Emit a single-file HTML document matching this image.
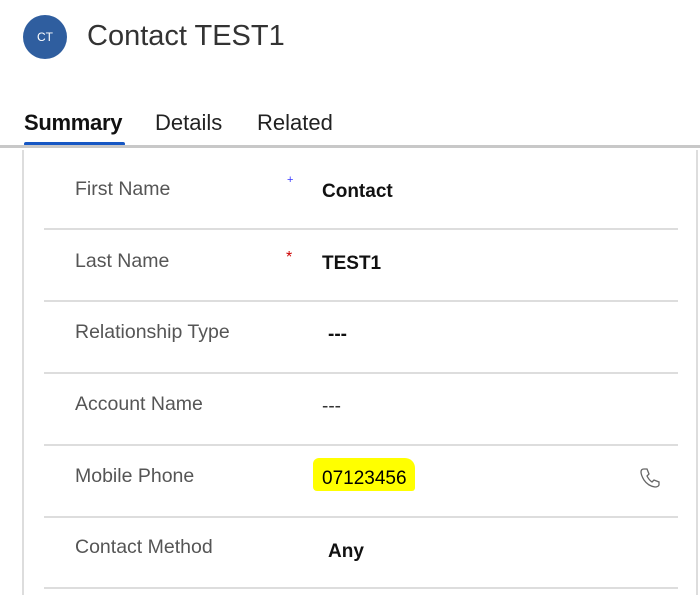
<!DOCTYPE html>
<html><head><style>
body{margin:0;width:700px;height:595px;background:#fff;font-family:"Liberation Sans",sans-serif;position:relative;overflow:hidden}
.a{position:absolute}
.lbl{position:absolute;left:75px;font-size:19.5px;color:#555}
.val{position:absolute;font-size:19px;font-weight:bold;color:#111}
.sep{position:absolute;left:44px;width:634px;height:2px;background:#ddd}
</style></head><body>
<div class="a" style="left:23px;top:15px;width:44px;height:44px;border-radius:50%;background:#2f5e9f;color:#fff;font-size:12px;line-height:44px;text-align:center">CT</div>
<div class="a" style="left:87px;top:20px;font-size:29px;color:#333">Contact TEST1</div>
<div class="a" style="left:24px;top:110px;font-size:22px;color:#111;font-weight:bold;letter-spacing:-0.3px">Summary</div>
<div class="a" style="left:155px;top:110px;font-size:22px;color:#222">Details</div>
<div class="a" style="left:257px;top:110px;font-size:22px;color:#222">Related</div>
<div class="a" style="left:24px;top:142px;width:101px;height:4px;background:#1657c4;border-radius:2px"></div>
<div class="a" style="left:0;top:145px;width:700px;height:3px;background:#c8c8c8"></div>
<div class="a" style="left:22px;top:150px;width:2px;height:445px;background:#ddd"></div>
<div class="a" style="left:696px;top:150px;width:2px;height:445px;background:#ddd"></div>

<div class="lbl" style="top:178px">First Name</div>
<div class="a" style="left:287px;top:174px;font-size:11px;color:#33f">+</div>
<div class="val" style="left:322px;top:181px">Contact</div>
<div class="sep" style="top:228px"></div>

<div class="lbl" style="top:250px">Last Name</div>
<div class="a" style="left:286px;top:249px;font-size:16px;color:#c00">*</div>
<div class="val" style="left:322px;top:253px">TEST1</div>
<div class="sep" style="top:300px"></div>

<div class="lbl" style="top:321px">Relationship Type</div>
<div class="val" style="left:328px;top:324px">---</div>
<div class="sep" style="top:372px"></div>

<div class="lbl" style="top:393px">Account Name</div>
<div class="a" style="left:322px;top:396px;font-size:19px;color:#333">---</div>
<div class="sep" style="top:444px"></div>

<div class="lbl" style="top:465px">Mobile Phone</div>
<div class="a" style="left:313px;top:458px;width:102px;height:33px;background:#ffff00;border-radius:6px 10px 3px 4px"></div>
<div class="val" style="left:322px;top:468px;font-weight:normal;color:#000">07123456</div>
<svg class="a" style="left:638px;top:466px" width="24" height="24" viewBox="0 0 24 24"><path d="M6 3 L9 3 L11 8 L9 10 Q11 14 14 16 L16 14 L21 16 L21 19 Q20 21 17 21 Q10 20 6 14 Q3 9 3 6 Q3 3 6 3Z" fill="none" stroke="#666" stroke-width="1.3"/></svg>
<div class="sep" style="top:516px"></div>

<div class="lbl" style="top:536px">Contact Method</div>
<div class="val" style="left:328px;top:541px">Any</div>
<div class="sep" style="top:587px"></div>
</body></html>
